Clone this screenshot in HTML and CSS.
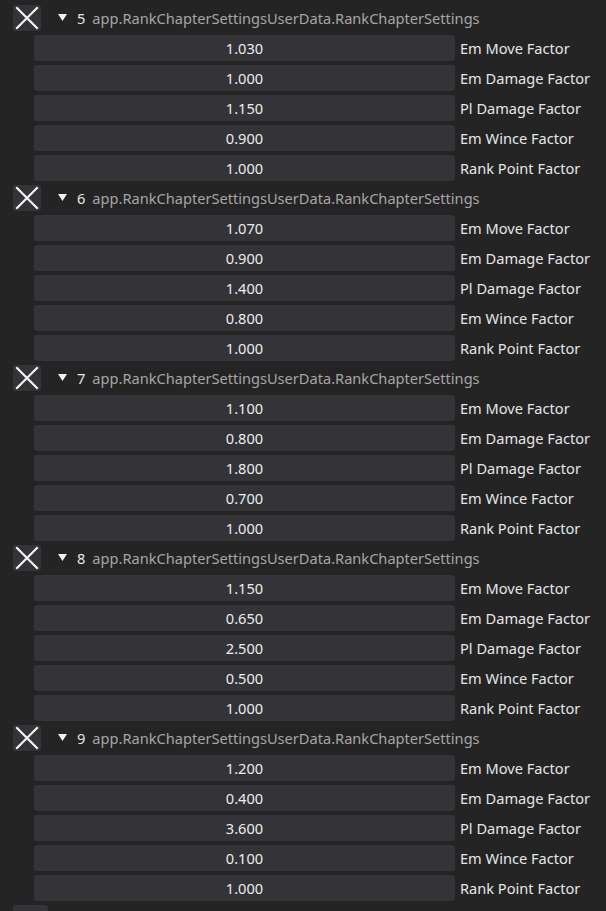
FILE: index.html
```html
<!DOCTYPE html>
<html>
<head>
<meta charset="utf-8">
<link rel="stylesheet" href="styles.css">
</head>
<body>
<div class="list" id="list"></div>
<div class="tail"></div>
<script>
const data = [
  [5, ["1.030","1.000","1.150","0.900","1.000"]],
  [6, ["1.070","0.900","1.400","0.800","1.000"]],
  [7, ["1.100","0.800","1.800","0.700","1.000"]],
  [8, ["1.150","0.650","2.500","0.500","1.000"]],
  [9, ["1.200","0.400","3.600","0.100","1.000"]]
];
const labels = ["Em Move Factor","Em Damage Factor","Pl Damage Factor","Em Wince Factor","Rank Point Factor"];
const list = document.getElementById('list');
let html = '';
for (const [n, vals] of data) {
  html += '<div class="group"><div class="head"><div class="xbtn"><svg width="28" height="26" viewBox="0 0 28 26"><path d="M4 3 L24 23 M24 3 L4 23" stroke="#f4f4f4" stroke-width="2.2" stroke-linecap="square"/></svg></div>' +
    '<svg class="tri" width="9" height="7" viewBox="0 0 9 7"><path d="M0 0 H9 L4.5 7 Z" fill="#f0f0f0"/></svg><span class="num">' + n + '</span><span class="type">app.RankChapterSettingsUserData.RankChapterSettings</span></div>';
  vals.forEach((v, i) => {
    html += '<div class="row"><div class="field">' + v + '</div><div class="label">' + labels[i] + '</div></div>';
  });
  html += '</div>';
}
list.innerHTML = html;
</script>
</body>
</html>
```
FILE: styles.css
```css
html, body {
  margin: 0;
  padding: 0;
  background: #242424;
  font-family: "Noto Sans", "Open Sans", sans-serif;
  font-size: 14.6px;
  color: #e6e6e6;
  overflow: hidden;
}
.list {
  display: flex;
  flex-direction: column;
  padding-top: 5px;
  gap: 4px;
}
.group {
  display: flex;
  flex-direction: column;
  gap: 4px;
}
.head {
  height: 26px;
  display: flex;
  align-items: center;
  padding-left: 13px;
}
.xbtn {
  width: 28px;
  height: 26px;
  background: #333338;
  border-radius: 3px;
  display: flex;
}
.tri {
  margin-left: 17px;
  margin-top: -1px;
  display: block;
}
.num {
  margin-left: 10px;
  color: #e6e6e6;
}
.type {
  margin-left: 7px;
  color: #a6a6a6;
}
.row {
  height: 26px;
  display: flex;
  align-items: center;
  padding-left: 34px;
}
.field {
  width: 421px;
  height: 26px;
  background: #333338;
  border-radius: 3px;
  display: flex;
  align-items: center;
  justify-content: center;
  color: #ececec;
}
.label {
  margin-left: 5px;
  white-space: nowrap;
  color: #e6e6e6;
}
.tail {
  margin-top: 4px;
  margin-left: 13px;
  width: 35px;
  height: 26px;
  background: #333338;
  border-radius: 3px;
}
```
